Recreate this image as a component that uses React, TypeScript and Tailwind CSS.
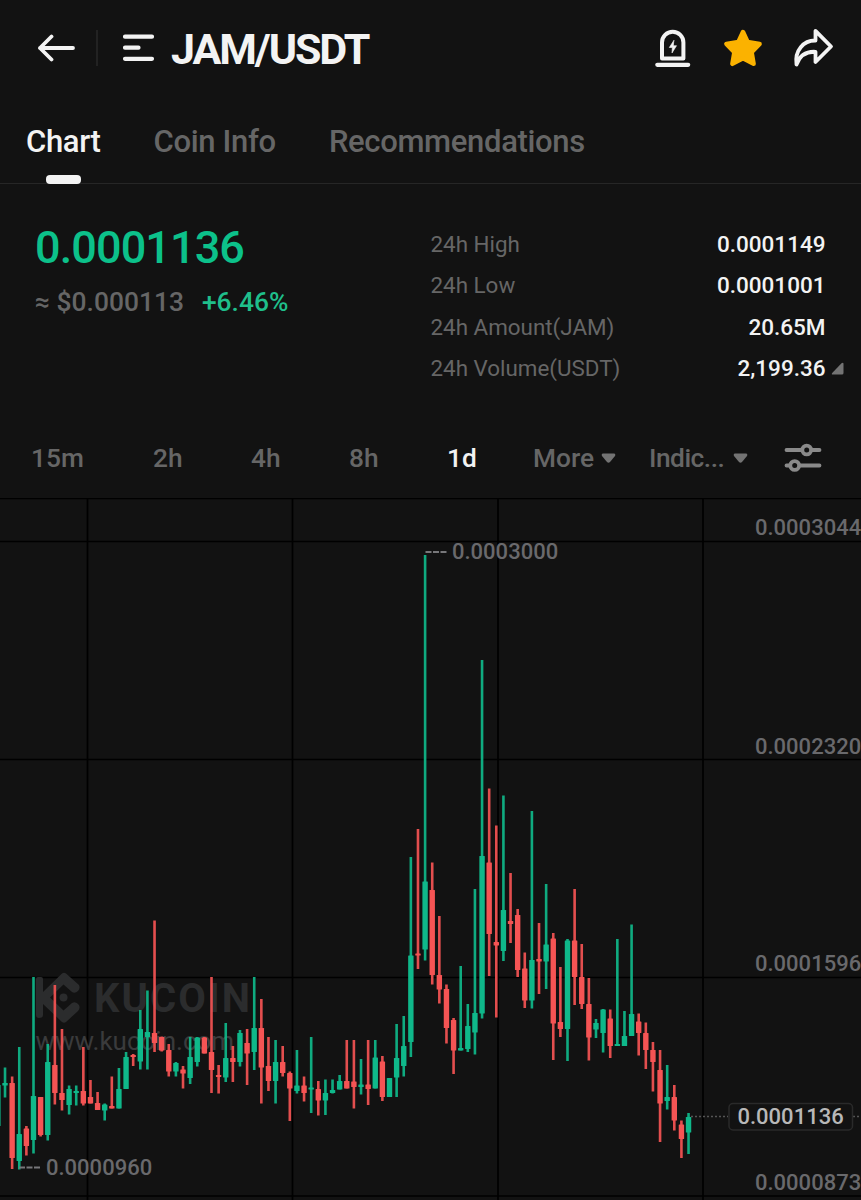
const tabs = ["Chart", "Coin Info", "Recommendations"];

const stats = [
  { label: "24h High", value: "0.0001149" },
  { label: "24h Low", value: "0.0001001" },
  { label: "24h Amount(JAM)", value: "20.65M" },
  { label: "24h Volume(USDT)", value: "2,199.36" },
];

type Candle = [color: "g" | "r", high: number, low: number, top: number, bottom: number];

// y positions on the chart canvas, oldest candle first
const candles: Candle[] = [
  ["g", 1085, 1126, 1085, 1126],
  ["g", 1067.5, 1097.5, 1083, 1085.5],
  ["r", 1076.5, 1169, 1083, 1158],
  ["g", 1047, 1169.5, 1134, 1161],
  ["r", 1126, 1155.5, 1128.5, 1146],
  ["g", 977, 1153.5, 1096, 1140],
  ["r", 1097, 1136.5, 1097, 1135],
  ["g", 1044, 1140.5, 1062, 1135],
  ["r", 985, 1104.5, 1065, 1093],
  ["r", 1029, 1110.5, 1093, 1100],
  ["g", 1085.5, 1114.5, 1089, 1105],
  ["g", 1085.5, 1105.5, 1091, 1093],
  ["r", 1047, 1105.5, 1091, 1103.5],
  ["r", 1080, 1103.5, 1097, 1103.5],
  ["r", 1092, 1110, 1103, 1110],
  ["g", 1103.5, 1120.5, 1104.5, 1110.5],
  ["r", 1076.5, 1108.5, 1106, 1108.5],
  ["g", 1068, 1108.5, 1089, 1108.5],
  ["g", 1052, 1089, 1057, 1089],
  ["r", 1054, 1066, 1055, 1057],
  ["g", 1010, 1069.5, 1029, 1061.5],
  ["g", 990.5, 1069.5, 1032, 1037],
  ["r", 920.5, 1052, 1033, 1043],
  ["r", 1036.5, 1051.5, 1037, 1050.5],
  ["r", 1044, 1076.5, 1050, 1071.5],
  ["g", 1062, 1076.5, 1063, 1071.5],
  ["r", 1066, 1088.5, 1069.5, 1073.5],
  ["g", 1037, 1084, 1057, 1078],
  ["g", 1037, 1066.5, 1037.5, 1062],
  ["r", 1037, 1053.5, 1037.5, 1053.5],
  ["r", 977, 1093, 1052, 1070],
  ["r", 1065, 1093.5, 1075, 1077],
  ["g", 1023, 1082, 1058, 1077.5],
  ["r", 1046, 1082, 1058, 1062],
  ["g", 1030, 1066.5, 1033, 1062],
  ["r", 1029, 1085, 1043, 1053.5],
  ["g", 977, 1070, 1028, 1052],
  ["r", 999, 1103.5, 1028, 1067.5],
  ["r", 1037, 1091, 1066, 1081],
  ["g", 1040, 1103.5, 1062, 1081],
  ["r", 1046, 1076.5, 1062, 1073],
  ["r", 1071.5, 1121, 1073, 1088.5],
  ["g", 1050, 1093.5, 1085.5, 1091],
  ["r", 1076.5, 1101.5, 1085.5, 1093],
  ["g", 1037, 1113, 1087.5, 1089.5],
  ["r", 1081, 1115.5, 1089, 1100.5],
  ["g", 1079.5, 1115, 1093, 1100.5],
  ["g", 1079.5, 1093.5, 1090, 1093],
  ["g", 1075, 1089.5, 1081, 1089.5],
  ["r", 1040, 1088.5, 1081, 1088.5],
  ["r", 1040, 1108.5, 1081.5, 1087],
  ["g", 1059, 1094.5, 1084.5, 1087],
  ["r", 1040, 1105, 1084.5, 1089],
  ["g", 1040, 1088.5, 1057.5, 1088.5],
  ["r", 1056, 1101, 1061.5, 1097],
  ["g", 1078, 1097, 1078, 1097],
  ["g", 1024, 1097, 1058, 1077.5],
  ["g", 1016, 1076.5, 1046, 1066],
  ["g", 857, 1057, 955.5, 1042],
  ["r", 829, 969, 953.5, 955.5],
  ["g", 555, 960.5, 881.5, 949.5],
  ["r", 862.5, 984.5, 890, 975],
  ["r", 916, 1003.5, 975, 989.5],
  ["r", 984.5, 1043.5, 989, 1028],
  ["r", 1018, 1074, 1020, 1050.5],
  ["g", 966, 1050.5, 1048, 1050.5],
  ["g", 1004, 1052, 1026, 1049],
  ["g", 889, 1054.5, 1013, 1032.5],
  ["g", 660, 1018.5, 856, 1013.5],
  ["r", 788.5, 976, 862.5, 934],
  ["r", 825.5, 1017.5, 942, 945.5],
  ["g", 795.5, 961, 910, 951],
  ["r", 873, 943, 921, 924],
  ["r", 909, 977, 915, 970],
  ["r", 952.5, 1008, 968.5, 1000.5],
  ["g", 811, 1008.5, 960, 1000.5],
  ["r", 923, 994, 959, 961.5],
  ["g", 884, 989, 944.5, 961.5],
  ["r", 933, 1060, 938.5, 1023.5],
  ["r", 967, 1037, 1022, 1029],
  ["g", 939, 1061, 940.5, 1029],
  ["r", 889, 1005, 940.5, 977],
  ["r", 944, 1009, 977, 1004],
  ["r", 978, 1060.5, 1004, 1037.5],
  ["g", 1019, 1038, 1023, 1029.5],
  ["g", 1009, 1052.5, 1009.5, 1033],
  ["r", 1009.5, 1058, 1018.5, 1046],
  ["g", 939, 1046, 1044, 1046],
  ["g", 1011, 1046, 1036, 1046],
  ["g", 924.5, 1036, 1014, 1036],
  ["r", 1013.5, 1055.5, 1021.5, 1033],
  ["r", 1022.5, 1069, 1033, 1050],
  ["r", 1042, 1091.5, 1050, 1062],
  ["r", 1050, 1142, 1070, 1103.5],
  ["g", 1065, 1109.5, 1097, 1101],
  ["r", 1085, 1130.5, 1097, 1120.5],
  ["r", 1120.5, 1158, 1124.5, 1139],
  ["g", 1113, 1154, 1117, 1132.5],
];

const FIRST_X = -2.1;
const STEP = 7.12;

const gridX = [87.5, 292.5, 498, 703];
const gridY = [541.5, 759.5, 977.5, 1196];

const axisLabels = [
  { text: "0.0003044", y: 535 },
  { text: "0.0002320", y: 753.5 },
  { text: "0.0001596", y: 971 },
  { text: "0.0000873", y: 1189.5 },
];

const Header = () => (
  <header className="flex h-24 items-center pr-[27px] pl-[37px]">
    <svg width="39" height="28" viewBox="0 0 39 28" fill="none" stroke="#f3f3f3" strokeWidth="3.8" strokeLinecap="round" strokeLinejoin="round">
      <path d="M36 14H3M14.5 2.5L3 14L14.5 25.5" />
    </svg>
    <div className="ml-5 h-9 w-0.5 bg-[#222222]" />
    <svg className="ml-[23px]" width="34" height="28" viewBox="0 0 34 28" fill="none" stroke="#f3f3f3" strokeWidth="4.2" strokeLinecap="round">
      <path d="M4 2.7H31M4 13.7H17.5M4 24.8H31" />
    </svg>
    <h1 className="mt-0.5 ml-4 text-[43px] leading-[50px] font-bold tracking-[-2.1px] text-[#f3f3f3]">JAM/USDT</h1>
    <div className="ml-auto flex items-center">
      <svg width="36" height="40" viewBox="0 0 36 40" fill="none" stroke="#f3f3f3" strokeWidth="4" strokeLinecap="round" strokeLinejoin="round">
        <path d="M7 30.5V14.5A10.7 10.7 0 0 1 28.4 14.5V30.5Z" />
        <path d="M2.3 36.8H33.2" strokeWidth="4.2" />
        <path d="M18.8 12.5L14.3 19.5H17.3L17 25L21.5 17.7H18.5Z" fill="#f3f3f3" stroke="#f3f3f3" strokeWidth="0.6" />
      </svg>
      <svg className="ml-8" width="40" height="40" viewBox="0 0 40 40" fill="#fbb200" stroke="#fbb200" strokeWidth="4.5" strokeLinejoin="round">
        <path d="M20 4L24.6 14L36.6 15.9L28.6 24.2L30.6 35.8L20 30.2L9.4 35.8L11.4 24.2L3.4 15.9L15.4 14Z" />
      </svg>
      <svg className="ml-[30px]" width="41" height="40" viewBox="0 0 41 40" fill="none" stroke="#f3f3f3" strokeWidth="3.8" strokeLinecap="round" strokeLinejoin="round">
        <path d="M22.5 2.8L38 18.5L22.5 34V23.8C12 23.2 6.5 28 3.5 36.5C1.5 22.5 10.5 12.3 22.5 12.5Z" />
      </svg>
    </div>
  </header>
);

const Tabs = () => (
  <nav className="flex h-[88px] gap-[53px] border-b border-[#262626] pl-[26px]">
    {tabs.map((tab, index) => (
      <div key={tab} className="flex flex-col items-center">
        <span
          className={`mt-[26px] text-[31px] leading-10 font-medium tracking-[-0.33px] ${
            index === 0 ? "text-[#f3f3f3]" : "text-[#666666]"
          }`}
        >
          {tab}
        </span>
        {index === 0 && <div className="mt-[13px] h-[9px] w-[35px] shrink-0 rounded bg-[#f3f3f3]" />}
      </div>
    ))}
  </nav>
);

const Summary = () => (
  <section className="flex h-[234px] pl-[35px]">
    <div className="w-[395.5px] pt-[38px]">
      <div className="text-[45px] leading-[52px] font-medium tracking-[-0.9px] text-[#0cc18a]">0.0001136</div>
      <div className="mt-3 flex text-[26.4px] leading-8 font-medium">
        <span className="text-[#666666]">≈ $0.000113</span>
        <span className="ml-[18px] text-[#1fbf8b]">+6.46%</span>
      </div>
    </div>
    <div className="w-[413.5px] pt-[39.5px] text-[22.5px] leading-[41.5px]">
      {stats.map((stat, index) => (
        <div key={stat.label} className="flex items-center">
          <span className="text-[22.4px] text-[#666666]">{stat.label}</span>
          <span className="ml-auto font-medium text-[#f3f3f3]">{stat.value}</span>
          <div className="flex w-[18.5px] justify-end">
            {index === stats.length - 1 && (
              <svg width="13" height="13" viewBox="0 0 13 13">
                <path d="M12.5 2V11Q12.5 12.5 11 12.5H2Q0 12.5 1.2 11L10.5 1.2Q12.5 0 12.5 2Z" fill="#737373" />
              </svg>
            )}
          </div>
        </div>
      ))}
    </div>
  </section>
);

const Caret = () => (
  <svg width="15" height="11" viewBox="0 0 15 11">
    <path d="M2 0.5H13Q15 1 14 3L9 9Q7.5 10.5 6 9L1 3Q0 1 2 0.5Z" fill="#737373" />
  </svg>
);

const Timeframes = () => (
  <div className="flex h-20 items-center pl-[31px] text-[26.3px] leading-10 font-medium text-[#666666]">
    <span className="w-[122px]">15m</span>
    <span className="w-[98px]">2h</span>
    <span className="w-[98px]">4h</span>
    <span className="w-[98px]">8h</span>
    <span className="w-[86px] text-[#f3f3f3]">1d</span>
    <div className="flex w-[116px] items-center gap-[7px]">
      More
      <Caret />
    </div>
    <div className="flex w-[135px] items-center">
      <span className="w-[84px] tracking-[-0.5px]">Indic...</span>
      <Caret />
    </div>
    <svg width="38" height="30" viewBox="0 0 38 30" fill="none" stroke="#8a8a8a" strokeWidth="3.8" strokeLinecap="round">
      <path d="M2.5 7H17M28 7H35.5M2.5 22.5H5M16 22.5H35.5" />
      <circle cx="22.7" cy="7" r="4.4" />
      <circle cx="10.7" cy="22.5" r="4.4" />
    </svg>
  </div>
);

const Watermark = () => (
  <g fill="#2b2c2d">
    <path d="M36 979Q36 977 38 977H41Q43 977 43 979V992L62 973.5Q64 972 66 973.5L79 985Q80.5 988 78 991Q75 994 72 992L63.5 984.5L50 997.5L63.5 1010.5L72 1003Q76 1001 79 1005Q80.5 1008 78 1011L66 1022Q64 1023.5 62 1022L43 1004V1015Q43 1018 39 1018Q36 1018 36 1015Z" />
    <circle cx="63.5" cy="997.5" r="4" />
    <text x="94" y="1012" fontSize="40" fontWeight="700" letterSpacing="2.1">
      KUCOIN
    </text>
    <text x="35.5" y="1050" fontSize="26" fill="#3a3b3c">
      www.kucoin.com
    </text>
  </g>
);

const PriceChart = () => (
  <svg className="block" width="861" height="702" viewBox="0 498 861 702" fontFamily="Roboto, sans-serif">
    <g stroke="#000000" strokeWidth="1.7">
      <path d="M0 498.5H861" />
      {gridX.map((x) => (
        <line key={x} x1={x} x2={x} y1="498" y2="1200" />
      ))}
      {gridY.map((y) => (
        <line key={y} x1="0" x2="861" y1={y} y2={y} />
      ))}
    </g>
    <Watermark />
    {candles.map(([color, high, low, top, bottom], index) => {
      const x = FIRST_X + index * STEP;
      return (
        <g key={index} fill={color === "g" ? "#0fb88a" : "#f55454"}>
          <rect x={x - 1.3} y={high} width="2.6" height={low - high} opacity="0.92" />
          <rect x={x - 2.7} y={top} width="5.4" height={bottom - top} rx="0.5" />
        </g>
      );
    })}
    <g stroke="#77777a" strokeWidth="2" strokeDasharray="6 1.5">
      <path d="M425.5 552H446.5" />
      <path d="M19 1167.5H41" />
    </g>
    <g fontSize="22" fontWeight="500" fill="#69696c">
      <text x="452" y="559">0.0003000</text>
      <text x="46" y="1174.5">0.0000960</text>
      {axisLabels.map((label) => (
        <text key={label.text} x="755" y={label.y}>
          {label.text}
        </text>
      ))}
    </g>
    <path d="M691 1116.5H728M853 1116.5H861" stroke="#555555" strokeWidth="1.5" strokeDasharray="2 2" />
    <rect x="729" y="1103.5" width="123.5" height="26.5" rx="4" fill="#121212" stroke="#2a2a2a" strokeWidth="1.5" />
    <text x="737.5" y="1123.5" fontSize="22" fontWeight="500" fill="#b8b8b8">
      0.0001136
    </text>
  </svg>
);

const App = () => {
  return (
    <div className="h-[1200px] w-[861px] overflow-hidden bg-[#121212] font-[Roboto,sans-serif] whitespace-nowrap">
      <Header />
      <Tabs />
      <Summary />
      <Timeframes />
      <PriceChart />
    </div>
  );
};

export default App;
